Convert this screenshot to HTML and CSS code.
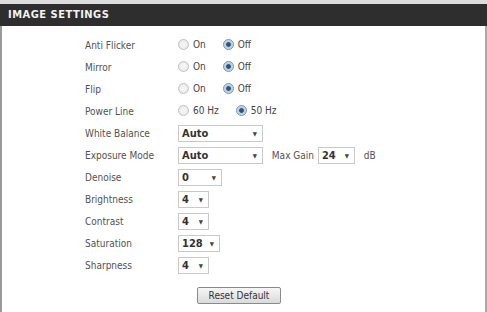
FILE: index.html
```html
<!DOCTYPE html>
<html lang="en">
<head>
  <meta charset="UTF-8" />
  <title>Image Settings</title>
  <link rel="stylesheet" href="styles.css">
</head>
<body>
  <div class="box">
    <div class="box-head">IMAGE SETTINGS</div>
    <div class="box-body">
      <table class="form">
        <tr>
          <td class="lbl">Anti Flicker</td>
          <td>
            <label class="opt"><input type="radio" name="flicker"> On</label>
            <label class="opt"><input type="radio" name="flicker" checked> Off</label>
          </td>
        </tr>
        <tr>
          <td class="lbl">Mirror</td>
          <td>
            <label class="opt"><input type="radio" name="mirror"> On</label>
            <label class="opt"><input type="radio" name="mirror" checked> Off</label>
          </td>
        </tr>
        <tr>
          <td class="lbl">Flip</td>
          <td>
            <label class="opt"><input type="radio" name="flip"> On</label>
            <label class="opt"><input type="radio" name="flip" checked> Off</label>
          </td>
        </tr>
        <tr>
          <td class="lbl">Power Line</td>
          <td>
            <label class="opt"><input type="radio" name="power"> 60 Hz</label>
            <label class="opt"><input type="radio" name="power" checked> 50 Hz</label>
          </td>
        </tr>
        <tr>
          <td class="lbl">White Balance</td>
          <td><span class="sel w-wide">Auto<i class="arr">&#9660;</i></span></td>
        </tr>
        <tr>
          <td class="lbl">Exposure Mode</td>
          <td>
            <span class="sel w-wide">Auto<i class="arr">&#9660;</i></span>
            <span class="extra">Max Gain</span>
            <span class="sel w-gain">24<i class="arr">&#9660;</i></span>
            <span class="extra">dB</span>
          </td>
        </tr>
        <tr>
          <td class="lbl">Denoise</td>
          <td><span class="sel w-mid">0<i class="arr">&#9660;</i></span></td>
        </tr>
        <tr>
          <td class="lbl">Brightness</td>
          <td><span class="sel w-small">4<i class="arr">&#9660;</i></span></td>
        </tr>
        <tr>
          <td class="lbl">Contrast</td>
          <td><span class="sel w-small">4<i class="arr">&#9660;</i></span></td>
        </tr>
        <tr>
          <td class="lbl">Saturation</td>
          <td><span class="sel w-sat">128<i class="arr">&#9660;</i></span></td>
        </tr>
        <tr>
          <td class="lbl">Sharpness</td>
          <td><span class="sel w-small">4<i class="arr">&#9660;</i></span></td>
        </tr>
      </table>
      <div class="actions">
        <button class="btn">Reset Default</button>
      </div>
    </div>
  </div>
</body>
</html>
```

FILE: styles.css
```css
body {
  margin: 0;
  font-family: "DejaVu Sans Condensed", "DejaVu Sans", sans-serif;
  font-size: 10px;
  color: #525252;
  background: #fff;
}

.box {
  border-top: 4px solid #dcdcdc;
  height: 312px;
  box-sizing: border-box;
}

.box-head {
  background: #2e2e2e;
  color: #f2f2f2;
  font-weight: bold;
  font-size: 11px;
  letter-spacing: 0.5px;
  height: 22px;
  line-height: 22px;
  padding-left: 8px;
}

.box-body {
  border-left: 2px solid #9a9a9a;
  border-right: 2px solid #a8a8a8;
  height: 286px;
  box-sizing: border-box;
  padding-top: 8px;
}

.form {
  border-collapse: collapse;
  margin-left: 83px;
}

.form td {
  height: 22px;
  padding: 0;
  white-space: nowrap;
}

.lbl {
  width: 93px;
}

.opt {
  display: inline-flex;
  align-items: center;
  gap: 4px;
  margin-right: 14px;
  color: #444;
}

.opt input {
  margin: 0;
  width: 11px;
  height: 11px;
  appearance: none;
  border-radius: 50%;
  border: 1px solid #c4c4c4;
  background: radial-gradient(circle, #f4f4f4 30%, #e0e0e0 100%);
}

.opt input:checked {
  border-color: #7d97b0;
  background: radial-gradient(circle, #2d5478 0 30%, #b8cde0 45%, #d6e2ee 100%);
}

.sel {
  display: inline-block;
  position: relative;
  box-sizing: border-box;
  height: 17px;
  line-height: 15px;
  border: 1px solid #c9c9c9;
  padding-left: 3px;
  font-weight: bold;
  font-size: 11px;
  color: #333;
  vertical-align: middle;
}

.arr {
  position: absolute;
  right: 5px;
  top: 0;
  font-style: normal;
  font-size: 6px;
  color: #444;
}

.w-wide { width: 85px; }
.w-mid { width: 44px; }
.w-small { width: 31px; }
.w-sat { width: 42px; }
.w-gain { width: 37px; }

.extra {
  margin-left: 6px;
  margin-right: 1px;
  vertical-align: middle;
}

.actions {
  text-align: center;
  margin-top: 11px;
  padding-right: 9px;
}

.btn {
  font-family: inherit;
  font-size: 10px;
  color: #333;
  width: 84px;
  height: 17px;
  padding: 0;
  border: 1px solid #8a8a8a;
  border-radius: 2px;
  background: linear-gradient(#f6f6f6, #dadada);
}
```
